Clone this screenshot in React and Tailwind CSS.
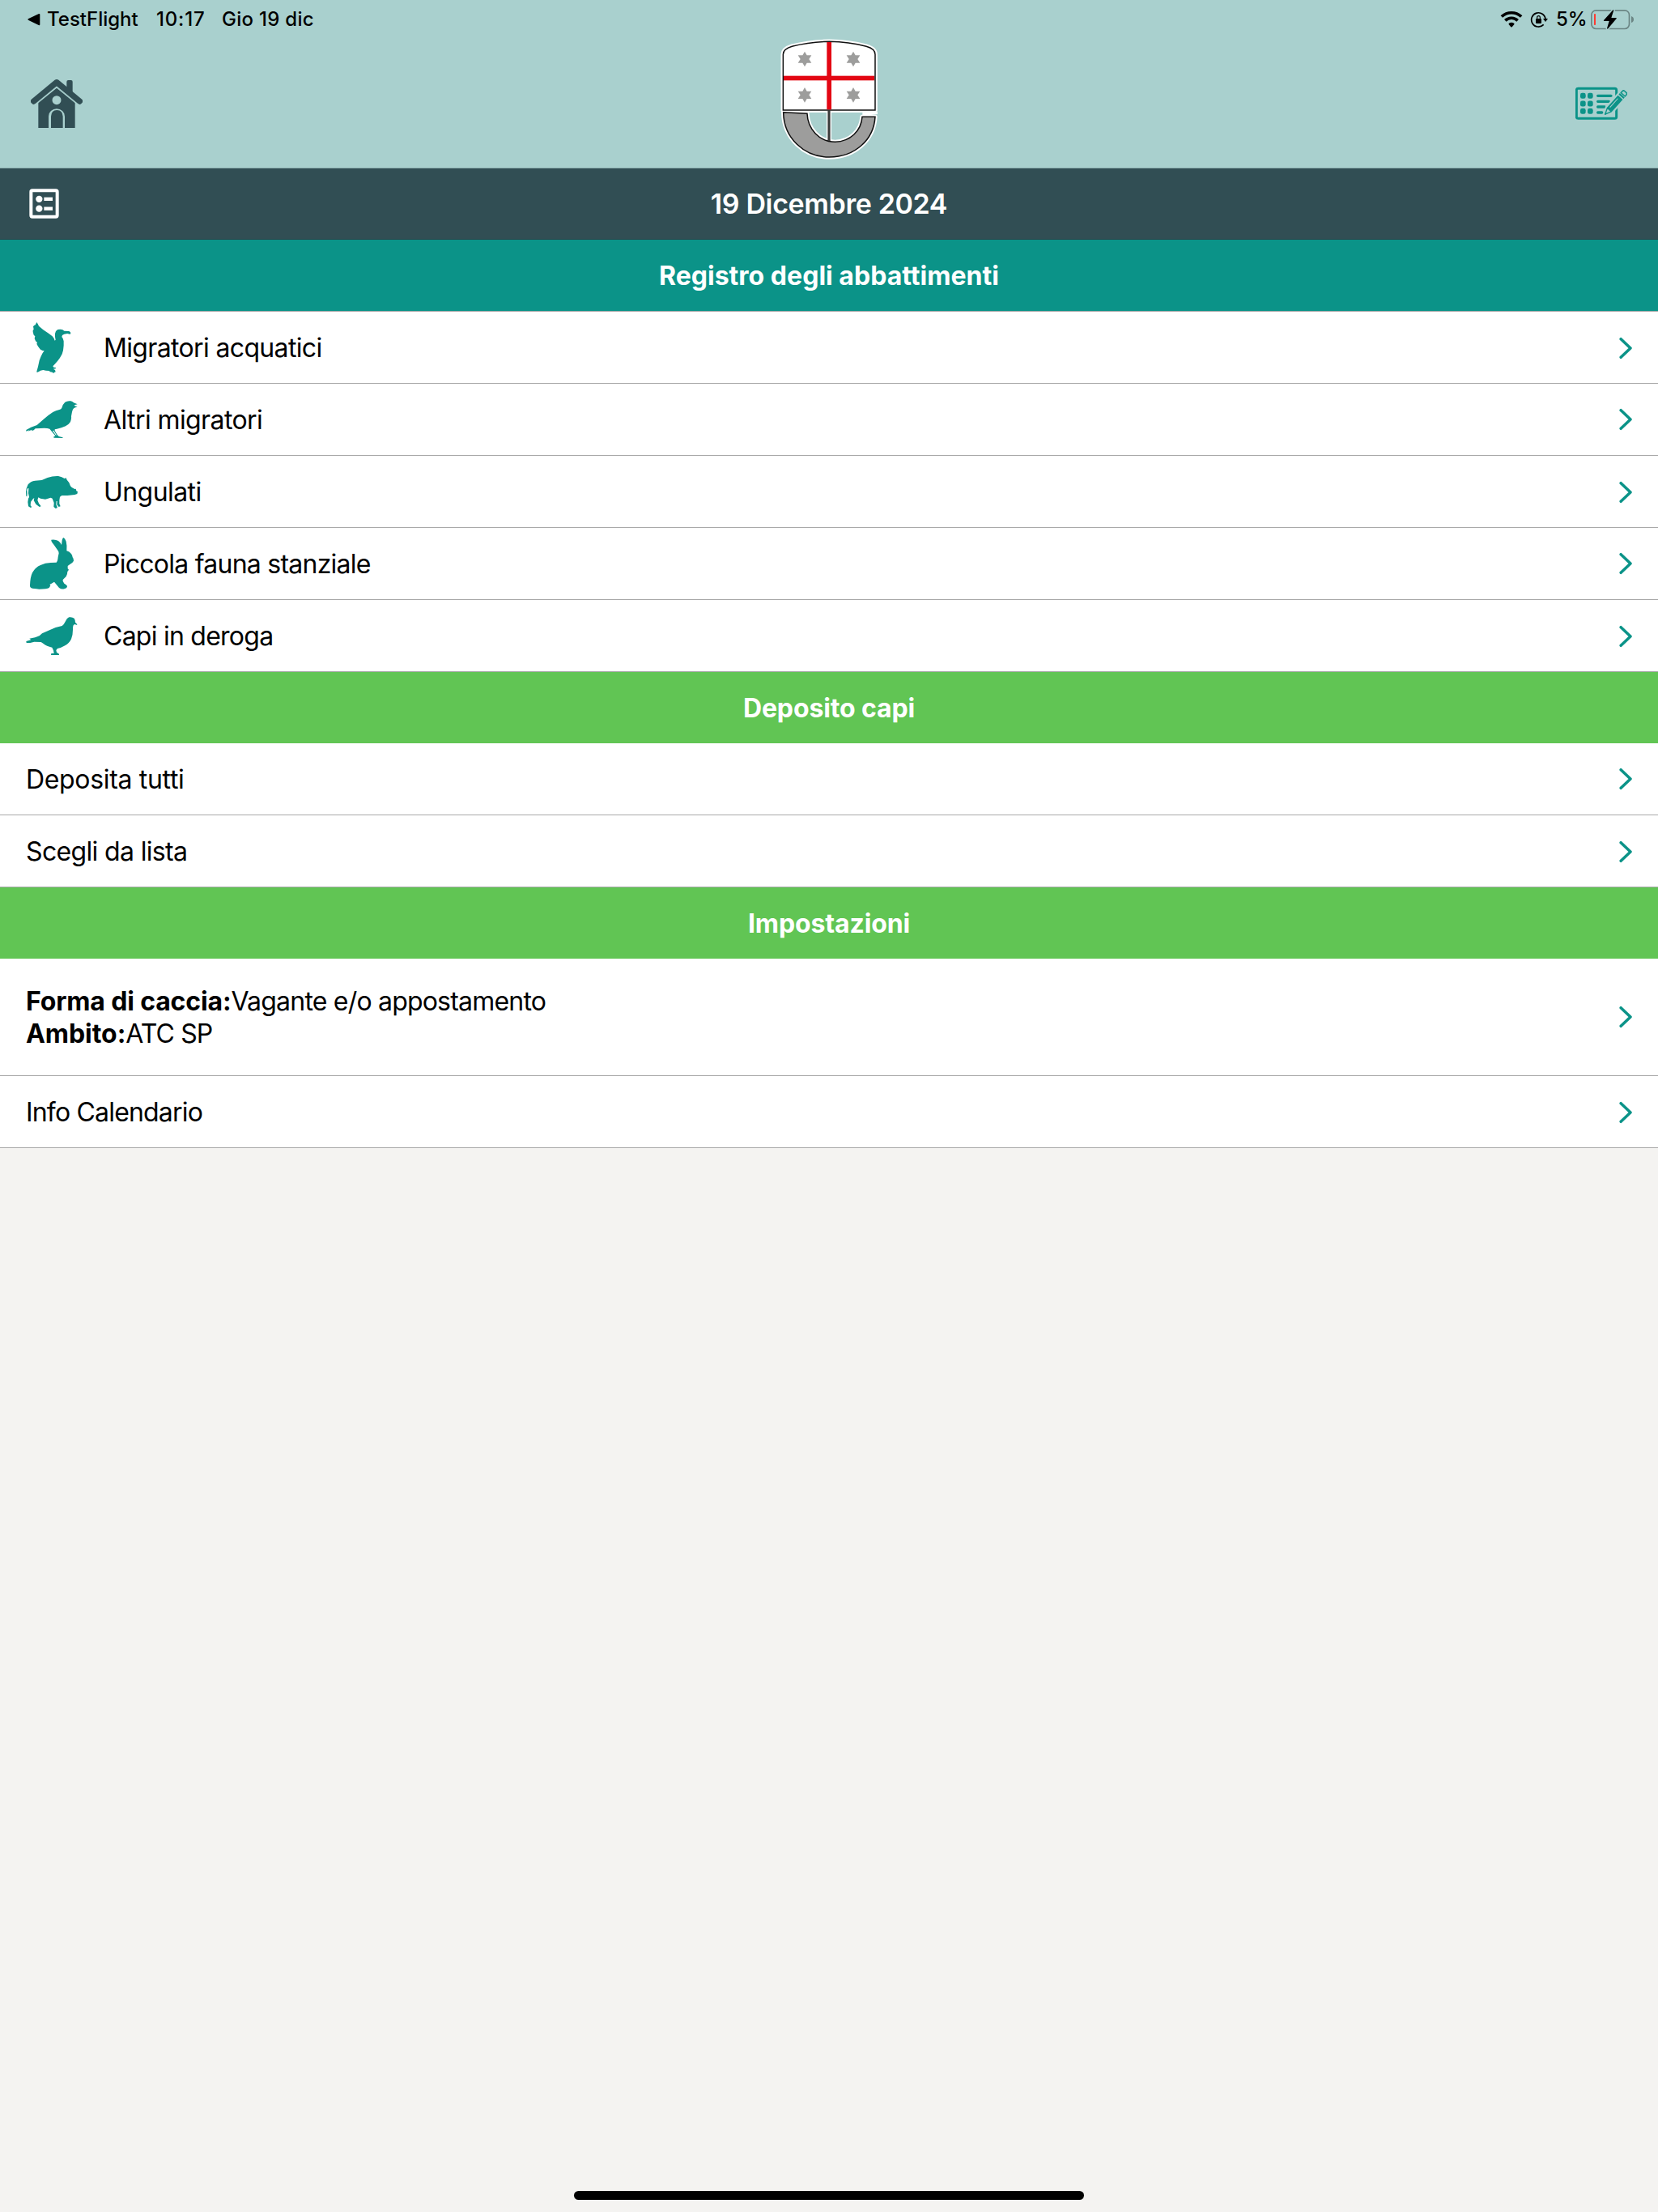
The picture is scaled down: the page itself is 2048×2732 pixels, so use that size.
import React from "react";

const SKY = "#a9d0ce";
const SLATE = "#314e54";
const TEAL = "#0b9388";

function BackTriangle() {
  return (
    <svg className="h-[16px] w-[16px]" viewBox="101 47 48 48">
      <path d="M105 68 L143 50 Q147 49 147 53 V89 Q147 94 142 92 L105 74 Q99 71 105 68Z" fill="#000" />
    </svg>
  );
}

function WifiIcon() {
  return (
    <svg className="h-[22px] w-[28px]" viewBox="99 39 84 66" fill="none" stroke="#000" strokeWidth="11">
      <path d="M104.500 61.500 A54 54 0 0 1 177.500 61.500" />
      <path d="M118 76 A33 33 0 0 1 164 76" />
      <path d="M133.500 89 Q141 84 148.500 89 L141 97.500Z" fill="#000" strokeWidth="6" strokeLinejoin="round" />
    </svg>
  );
}

function RotationLockIcon() {
  return (
    <svg className="h-[21px] w-[22px]" viewBox="210 39 66 63">
      <path d="M267 70 A26 26 0 1 0 260 88" fill="none" stroke="#000" strokeWidth="5" />
      <path d="M258 66 H276 L267 78Z" fill="#000" />
      <rect x="231" y="66" width="21" height="18" rx="3" fill="#000" />
      <path d="M236 67 V62 a5.5 6 0 0 1 11 0 V67" fill="none" stroke="#000" strokeWidth="3.5" />
    </svg>
  );
}

function BatteryIcon() {
  return (
    <svg className="h-[26px] w-[54px]" viewBox="435 33 162 78">
      <rect x="437.5" y="38.5" width="140" height="68" rx="17" fill="none" stroke="#6b8584" strokeWidth="5" />
      <path d="M585 60 Q594 63 594 72 Q594 81 585 84Z" fill="#6b8584" />
      <rect x="447" y="51" width="6" height="42" rx="2" fill="#ff3b30" />
      <path
        d="M518 36 L483 75 Q481 78 485 78 H503 L495 105 Q496 109 499 106 L530 69 Q532 66 528 66 H511 L520 38Z"
        fill="#000" stroke={SKY} strokeWidth="9" strokeLinejoin="round" paintOrder="stroke"
      />
    </svg>
  );
}

function HouseIcon() {
  return (
    <svg className="h-[64px] w-[64px]" viewBox="114 288 192 192">
      <path d="M247 345 V303 Q247 297 253 297 H263 Q269 297 269 303 V345Z" fill={SLATE} />
      <path d="M142 474 V379 L210 324 L278 379 V474Z" fill={SLATE} />
      <path d="M125 375 L210 305 L295 375" fill="none" stroke={SLATE} strokeWidth="22" strokeLinecap="round" strokeLinejoin="round" />
      <path d="M139 382 L210 324 L281 382" fill="none" stroke={SKY} strokeWidth="3.2" />
      <circle cx="210" cy="371" r="16.5" fill={SKY} />
      <path d="M180 475 V431 A30 28 0 0 1 240 431 V475Z" fill={SKY} />
      <path d="M189 474 V431 Q190 409 211 408 Q232 409 233 431 V474Z" fill={SLATE} />
    </svg>
  );
}

const STARS = [[162, 129], [342, 129], [162, 262], [342, 262]];

function Crest() {
  const lower =
    "M83 326 L171 331 C173 388 216 436 275 436 C330 434 371 396 375 343 H423 C418 426 350 492 253 492 C160 492 84 421 83 326Z";
  const upper =
    "M82 318 V112 C82 96 95 88 115 82 Q180 65 253 64 Q327 65 390 82 C412 88 423 97 423 112 V318Z";
  return (
    <svg className="h-[150px] w-[120px]" viewBox="72 54 360 450">
      <path d={upper} fill="none" stroke="#fff" strokeWidth="17" strokeLinejoin="round" />
      <path d={lower} fill="none" stroke="#fff" strokeWidth="16" strokeLinejoin="round" />
      <path d="M80 325 H432 V333 L376 340 V327 H80Z" fill="#fff" />
      <path d="M252 320 V434" stroke="#fff" strokeWidth="18" />
      <path d={lower} fill="#9d9d9c" stroke="#111" strokeWidth="4.5" strokeLinejoin="miter" />
      <path d="M252 320 V434" stroke="#111" strokeWidth="9" />
      <path d="M252 320 V432" stroke="#666" strokeWidth="3" />
      <path d={upper} fill="#fff" stroke="#111" strokeWidth="4.5" />
      <rect x="244" y="66" width="17" height="250" fill="#e30613" />
      <rect x="84" y="191" width="336" height="17" fill="#e30613" />
      {STARS.map(([x, y]) => (
        <polygon
          key={`${x}-${y}`}
          transform={`translate(${x} ${y})`}
          points="0,-28 8,-14 25,-14 16,0 25,14 8,14 0,28 -8,14 -25,14 -16,0 -25,-14 -8,-14"
          fill="#9d9d9c"
        />
      ))}
    </svg>
  );
}

function NotepadIcon() {
  return (
    <svg className="h-[64px] w-[64px]" viewBox="378 288 192 192">
      <rect x="382" y="328" width="148" height="111" rx="6" fill="none" stroke={TEAL} strokeWidth="9" />
      {[355, 384, 412].map((y) => (
        <g key={y} fill={TEAL}>
          <rect x="396" y={y - 10.5} width="20" height="21" rx="7" />
          <rect x="423" y={y - 10.5} width="20" height="21" rx="7" />
        </g>
      ))}
      <path d="M461 355 H510 M461 376 H502 M461 396 H486 M461 417 H476" stroke={TEAL} strokeWidth="10" strokeLinecap="round" />
      <g transform="translate(486 426) rotate(-48) scale(1.04)">
        <path d="M-6 0 L24 -18 H118 V18 H24Z" fill={SKY} />
        <path d="M3 0 L25 -9.5 V9.5Z" fill="none" stroke={TEAL} strokeWidth="4" strokeLinejoin="round" />
        <path d="M0 0 L9 -4 V4Z" fill={TEAL} />
        <path d="M25 -11.5 H84 V11.5 H25Z" fill={TEAL} />
        <path d="M34 -4 H74" stroke={SKY} strokeWidth="3" strokeLinecap="round" />
        <rect x="88" y="-11.5" width="6" height="23" fill={TEAL} />
        <path d="M98 -9.5 H105 Q111 -9.5 111 -4 V4 Q111 9.5 105 9.5 H98Z" fill="none" stroke={TEAL} strokeWidth="4.5" />
      </g>
    </svg>
  );
}

function ListIcon() {
  return (
    <svg className="h-[37px] w-[37px]" viewBox="108 699 111 111">
      <rect x="115" y="706" width="97" height="97" rx="5" fill="none" stroke="#fff" strokeWidth="12" />
      <circle cx="145" cy="737.5" r="12.5" fill="#fff" />
      <circle cx="145" cy="773" r="12.5" fill="#fff" />
      <rect x="163" y="731" width="32" height="13" fill="#fff" />
      <rect x="163" y="766.5" width="32" height="13" fill="#fff" />
    </svg>
  );
}

const ANIMALS = {
  duck: {
    box: "96 51 192 192",
    d: "M136 54 L140 60 L144 68 L160 82 L180 95 L194 106 L200 114 L203 122 L206 119 L204 108 L204 96 L207 87 L214 81 L224 80 L232 82 L238 86 L256 87 L261 91 L262 97 L258 98 L250 96 L238 98 L231 102 L229 108 L233 114 L236 124 L236 140 L234 158 L230 172 L222 186 L213 198 L203 209 L196 217 L199 221 L207 222 L206 226 L197 227 L204 231 L206 238 L201 240 L198 243 L194 239 L186 238 L182 234 L170 233 L160 231 L150 233 L144 237 L137 240 L136 236 L141 218 L146 195 L152 180 L158 168 L164 160 L158 159 L150 155 L144 148 L140 142 L136 134 L138 129 L132 124 L128 114 L130 106 L125 101 L122 90 L122 84 L125 80 L123 70 L127 65 L131 64Z",
  },
  songbird: {
    box: "96 318 192 192",
    d: "M241 350 Q250 344 262 346 Q269 347 273 352 L287 358 L275 361 L279 365 L287 367 L274 372 Q268 378 267 386 L264 402 Q265 414 261 423 Q255 433 243 439 Q228 446 211 449 L203 451 L203 456 L212 471 L218 477 L233 481 L232 483 L200 482 L198 479 L205 475 L192 459 L184 449 Q172 445 150 447 L131 448 L125 454 L117 457 L119 452 L103 458 L110 453 L97 458 L97 453 L115 443 L137 435 L160 415 Q177 399 196 387 Q207 381 220 378 Q227 376 229 371 Q233 357 241 350Z M195 456 L206 472 L210 473 L199 455Z",
  },
  boar: {
    box: "96 15 192 192",
    d: "M97 128 L96 112 L98 100 L104 85 Q113 73 130 71 L155 69 L176 60 Q196 53 216 54 Q230 57 239 63 L245 61 L248 68 Q258 77 261 91 L266 96 L277 102 L281 101 L283 109 L288 112 L286 120 L277 123 L250 126 L229 126 L222 131 L220 144 L220 157 L224 166 L218 168 L211 160 L212 147 L209 147 L208 160 L212 168 L212 172 L206 174 L199 168 L200 153 L194 137 L188 134 L168 140 L150 137 L142 133 L139 143 L144 155 L152 166 L146 168 L133 158 L125 144 L127 135 L122 139 L114 150 L113 163 L118 169 L113 171 L105 166 L103 150 L105 137 L108 132 L105 118 L106 100 L103 98 L100 105 L101 120 L100 130Z",
  },
  rabbit: {
    box: "96 282 192 192",
    d: "M190 290 Q206 288 216 294 L223 301 L228 309 L230 292 Q232 282 236 282 Q241 285 245 296 Q249 312 247 331 Q257 333 264 342 Q269 349 269 355 Q274 361 273 368 L268 375 L258 382 L251 387 L251 397 L255 401 L250 408 Q250 418 245 426 L233 438 L233 443 L238 452 Q249 458 249 463 Q248 470 238 472 Q227 474 219 468 L211 458 L201 446 L191 452 L184 456 L187 460 L182 468 Q174 473 145 473 Q122 472 116 469 Q110 466 111 459 Q112 428 120 412 Q131 392 150 384 Q168 375 188 375 L209 374 Q214 369 215 354 L218 340 Q219 334 211 325 L200 309 Q192 300 190 294Z",
  },
  pigeon: {
    box: "96 549 192 192",
    d: "M97 666 L115 661 L109 656 L130 652 L146 646 L156 637 L180 626 L206 615 L230 609 Q237 604 242 593 Q248 580 256 577 Q267 575 275 581 Q279 587 279 596 L285 602 L286 606 L276 603 Q270 606 270 616 Q271 640 264 658 Q257 673 241 682 Q228 690 213 693 L208 699 L210 707 L219 713 L219 717 L189 717 L190 711 L200 711 L198 700 L193 689 Q172 684 161 675 L152 669 L127 668 L112 672 L98 672Z",
  },
};

function AnimalIcon({ name }) {
  return (
    <svg className="mr-8 h-16 w-16" viewBox={ANIMALS[name].box}>
      <path d={ANIMALS[name].d} fill={TEAL} fillRule="evenodd" />
    </svg>
  );
}

function Chevron({ low }) {
  return (
    <svg className={low ? "mt-[2px] ml-auto h-[28px] w-[16px]" : "ml-auto h-[28px] w-[16px]"} viewBox="180 138 48 84">
      <path d="M186.5 146 L222 180 L186.5 214" fill="none" stroke={TEAL} strokeWidth="10.5" strokeLinecap="round" strokeLinejoin="round" />
    </svg>
  );
}

function Row({ icon, label, tracking, low }) {
  return (
    <div className="flex h-[89px] items-center border-b border-[#a9a9a9] bg-white px-8">
      {icon && <AnimalIcon name={icon} />}
      <span className={`pt-[2px] ${tracking}`}>{label}</span>
      <Chevron low={low} />
    </div>
  );
}

function SectionTitle({ children, className }) {
  return (
    <h2 className={`flex items-center justify-center pt-[2px] font-bold text-white ${className}`}>{children}</h2>
  );
}

const SPECIES = [
  { icon: "duck", label: "Migratori acquatici", tracking: "tracking-[-0.65px]", low: true },
  { icon: "songbird", label: "Altri migratori", tracking: "tracking-[-0.6px]" },
  { icon: "boar", label: "Ungulati", tracking: "tracking-[-0.57px]", low: true },
  { icon: "rabbit", label: "Piccola fauna stanziale", tracking: "tracking-[-0.75px]" },
  { icon: "pigeon", label: "Capi in deroga", tracking: "tracking-[-0.75px]", low: true },
];

export default function App() {
  return (
    <div className="flex h-[2732px] w-[2048px] flex-col bg-[#f4f3f1] font-['Inter','Liberation_Sans',sans-serif] text-[32px] leading-[40px] text-black">
      <header className="h-[208px] border-b border-[#8db0af] bg-[#a9d0ce]">
        <div className="flex h-[48px] items-center pr-[29px] pl-[34px] text-[24px] leading-[30px] font-medium">
          <BackTriangle />
          <span className="ml-[8px] w-[135px]">TestFlight</span>
          <span className="w-[81px] tracking-[0.8px]">10:17</span>
          <span className="tracking-[0.28px]">Gio 19 dic</span>
          <div className="ml-auto flex items-center">
            <WifiIcon />
            <span className="w-[9px]" />
            <RotationLockIcon />
            <span className="ml-[10px] w-[43px]">5%</span>
            <BatteryIcon />
          </div>
        </div>
        <div className="grid grid-cols-[1fr_auto_1fr] items-start px-[38px]">
          <div className="mt-12"><HouseIcon /></div>
          <Crest />
          <div className="mt-12 justify-self-end"><NotepadIcon /></div>
        </div>
      </header>

      <div className="grid h-[88px] grid-cols-[1fr_auto_1fr] items-center border-b border-[#2a4248] bg-[#314e54] px-9">
        <ListIcon />
        <h1 className="text-[34px] font-semibold tracking-[-0.37px] text-white">19 Dicembre 2024</h1>
      </div>

      <SectionTitle className="h-[89px] border-b border-[#a9a9a9] bg-[#0b9388] tracking-[0.02px]">
        Registro degli abbattimenti
      </SectionTitle>
      {SPECIES.map((s) => (
        <Row key={s.icon} {...s} />
      ))}

      <SectionTitle className="h-[88px] bg-[#61c554] tracking-[-0.12px]">Deposito capi</SectionTitle>
      <Row label="Deposita tutti" tracking="tracking-[-0.33px]" />
      <Row label="Scegli da lista" tracking="tracking-[-0.65px]" low />

      <SectionTitle className="h-[88px] bg-[#61c554] tracking-[-0.13px]">Impostazioni</SectionTitle>
      <div className="flex h-[145px] items-center border-b border-[#a9a9a9] bg-white px-8">
        <div className="pt-[2px]">
          <p><b className="tracking-[-0.15px]">Forma di caccia:</b><span className="tracking-[-0.8px]">Vagante e/o appostamento</span></p>
          <p><b className="tracking-[-0.05px]">Ambito:</b><span className="tracking-[-0.9px]">ATC SP</span></p>
        </div>
        <Chevron />
      </div>
      <Row label="Info Calendario" tracking="tracking-[-0.82px]" low />

      <div className="mx-auto mt-auto mb-[15px] h-[11px] w-[630px] rounded-full bg-black" />
    </div>
  );
}
